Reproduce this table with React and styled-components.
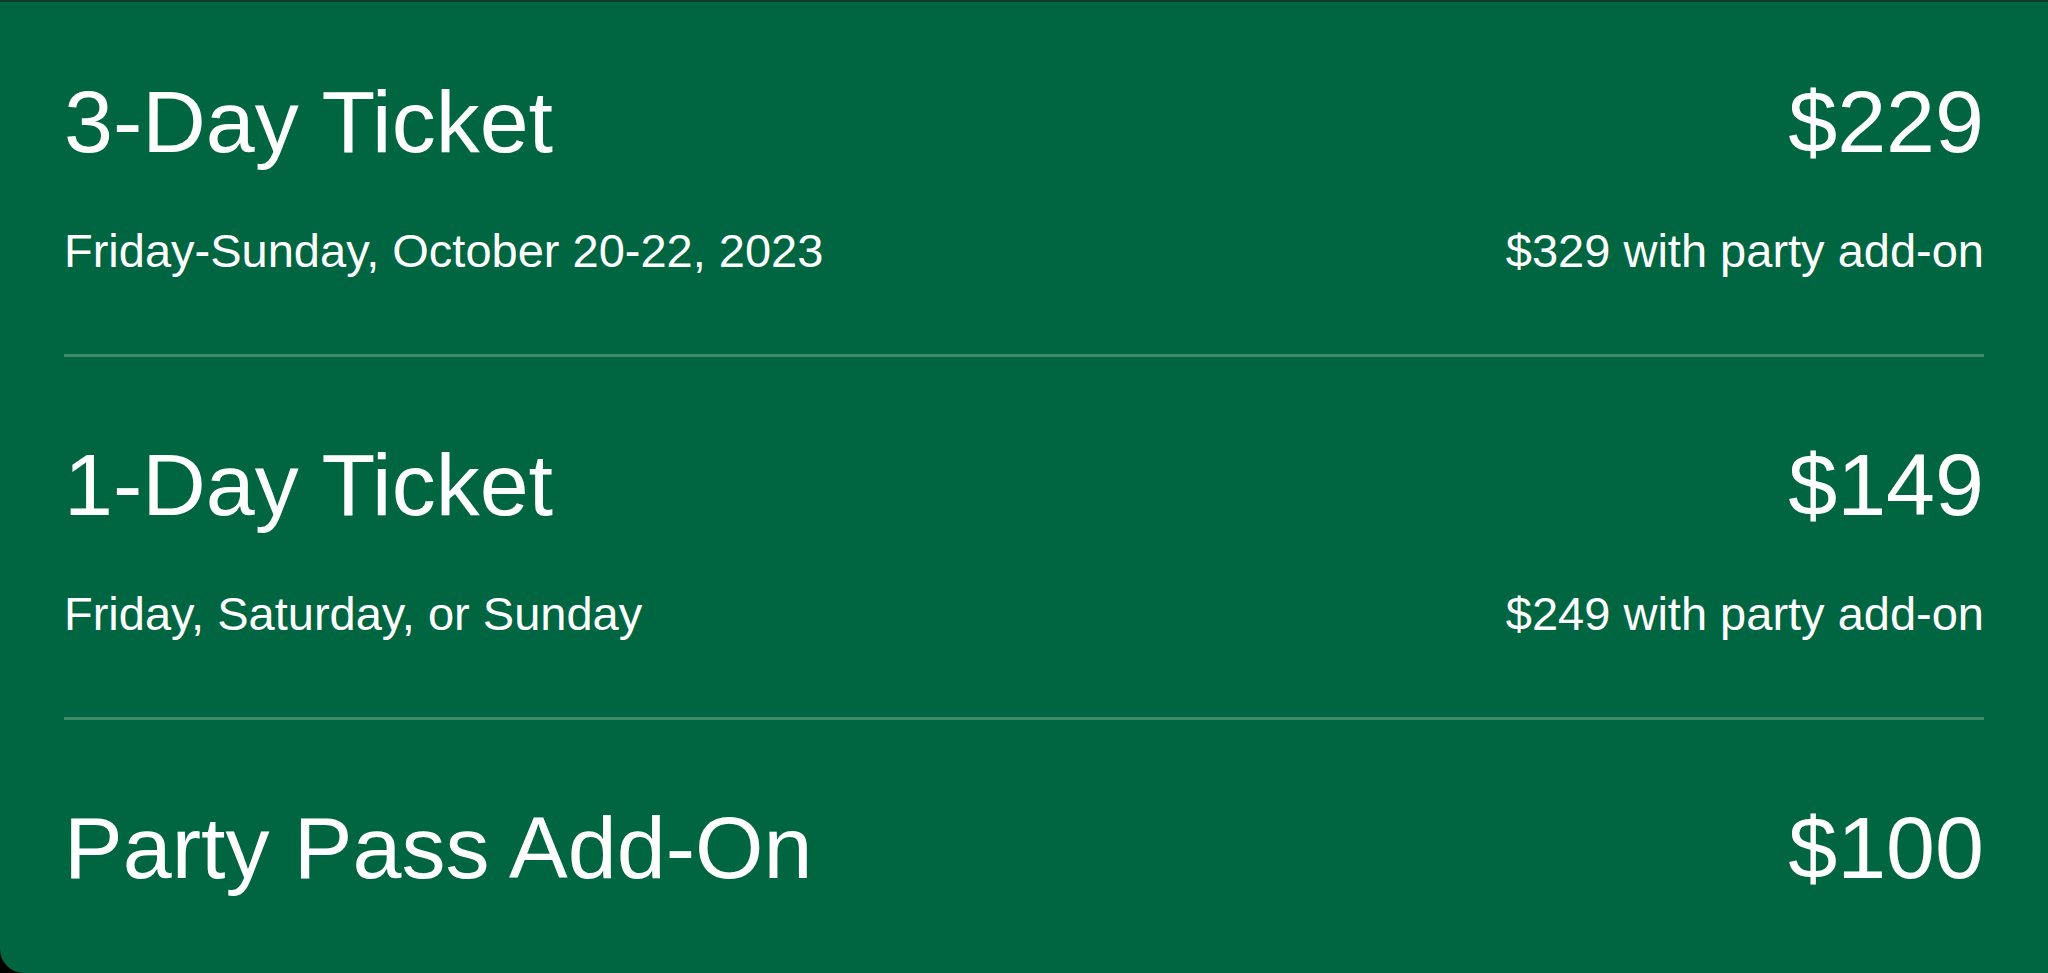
import styled, { createGlobalStyle } from 'styled-components';

const GlobalStyle = createGlobalStyle`
  html, body {
    margin: 0;
    padding: 0;
    background: #000;
  }
  body {
    font-family: "Liberation Sans", Arial, sans-serif;
  }
`;

const PriceCard = styled.div`
  box-sizing: border-box;
  height: 100vh;
  background: #006642;
  border-top: 2px solid #0c3b29;
  border-bottom-left-radius: 24px;
  padding: 0 64px;
  color: #fff;
  overflow: hidden;
`;

const TicketRow = styled.div`
  padding: 84px 0 80px;
  border-bottom: 3px solid #3e8a67;

  &:first-child {
    padding-top: 76px;
  }

  &:last-child {
    border-bottom: none;
  }
`;

const Line = styled.div`
  display: flex;
  justify-content: space-between;
  align-items: baseline;
  margin-top: ${({ $gap }) => $gap || 0}px;
`;

const Name = styled.h2`
  margin: 0;
  font-size: 88px;
  font-weight: 400;
  line-height: 1;
`;

const Price = styled(Name)`
  text-align: right;
`;

const Detail = styled.p`
  margin: 0;
  font-size: 47px;
  line-height: 1;
`;

const tickets = [
  {
    name: '3-Day Ticket',
    price: '$229',
    dates: 'Friday-Sunday, October 20-22, 2023',
    addOn: '$329 with party add-on',
  },
  {
    name: '1-Day Ticket',
    price: '$149',
    dates: 'Friday, Saturday, or Sunday',
    addOn: '$249 with party add-on',
  },
  {
    name: 'Party Pass Add-On',
    price: '$100',
  },
];

export default function App() {
  return (
    <>
      <GlobalStyle />
      <PriceCard>
        {tickets.map((t) => (
          <TicketRow key={t.name}>
            <Line>
              <Name>{t.name}</Name>
              <Price>{t.price}</Price>
            </Line>
            {t.dates && (
              <Line $gap={61}>
                <Detail>{t.dates}</Detail>
                <Detail>{t.addOn}</Detail>
              </Line>
            )}
          </TicketRow>
        ))}
      </PriceCard>
    </>
  );
}
